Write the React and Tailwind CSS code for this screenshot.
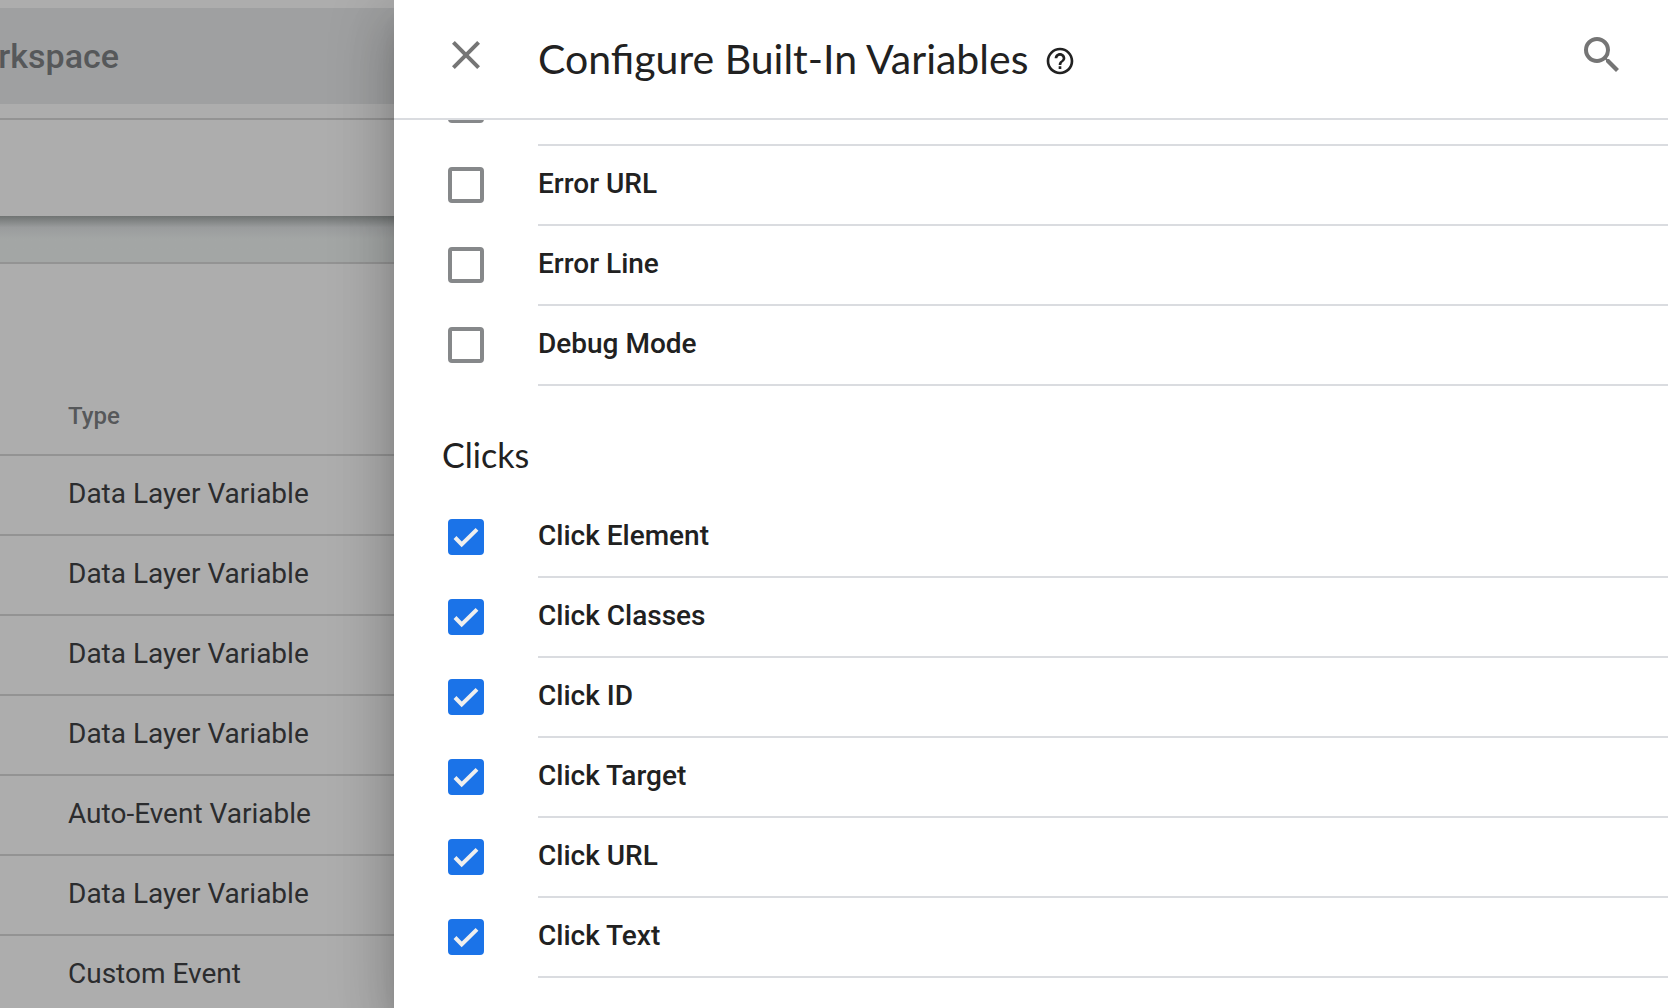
import React, { useState } from "react";
import { MdClose, MdSearch, MdHelpOutline } from "react-icons/md";

const variableTypes = [
  "Data Layer Variable",
  "Data Layer Variable",
  "Data Layer Variable",
  "Data Layer Variable",
  "Auto-Event Variable",
  "Data Layer Variable",
  "Custom Event",
];

const errorVariables = ["Error Message", "Error URL", "Error Line", "Debug Mode"];

const clickVariables = [
  "Click Element",
  "Click Classes",
  "Click ID",
  "Click Target",
  "Click URL",
  "Click Text",
];

const VariableRow = ({ name, checked, onToggle }) => {
  const id = name.toLowerCase().replace(/\s+/g, "-");

  return (
    <li className="flex h-20 pl-[54px]">
      <span className="grid h-[78px] w-[90px] shrink-0 items-center">
        <input
          id={id}
          type="checkbox"
          checked={checked}
          onChange={onToggle}
          className="col-start-1 row-start-1 size-9 appearance-none rounded-[4px] border-4 border-[#86888a] bg-white checked:border-[#1b73e8] checked:bg-[#1b73e8]"
        />
        {checked && (
          <svg
            viewBox="0 0 36 36"
            className="pointer-events-none col-start-1 row-start-1 size-9"
            fill="none"
            stroke="#efefef"
            strokeWidth="4"
          >
            <path d="M7 18.5 L13.7 25.5 L29 10.3" />
          </svg>
        )}
      </span>
      <label
        htmlFor={id}
        className="flex flex-1 items-center border-b-2 border-[#dadce0] pb-0.5 text-[28px] font-medium text-[#212121]"
      >
        {name}
      </label>
    </li>
  );
};

const WorkspacePage = () => (
  <div className="w-[394px] shrink-0 overflow-hidden bg-[#adadad] font-['Roboto',sans-serif]">
    <div className="border-b-2 border-[#939393] pt-2 pb-3.5">
      <div className="flex h-24 items-center bg-[#9fa0a1]">
        <div className="flex w-[119px] justify-end overflow-hidden text-[34px] font-medium text-[#56585a]">
          Workspace
        </div>
      </div>
    </div>
    <div className="h-24" />
    <div className="h-12 border-b-2 border-[#939393] bg-[#a3a6a5] bg-linear-to-b from-[#707473] via-[#9a9c9d] via-25% to-[#a3a6a5] to-50%" />

    <table className="w-full border-separate border-spacing-0 text-left">
      <thead>
        <tr className="h-48">
          <th className="border-b-2 border-[#939393] pb-[22px] pl-[68px] align-bottom text-2xl font-medium text-[#56585a]">
            Type
          </th>
        </tr>
      </thead>
      <tbody>
        {variableTypes.map((type, index) => (
          <tr key={index} className="h-20">
            <td className="border-b-2 border-[#939393] pb-0.5 pl-[68px] text-[28px] text-[#2b2c2e]">
              {type}
            </td>
          </tr>
        ))}
      </tbody>
    </table>
  </div>
);

const App = () => {
  const [selected, setSelected] = useState(clickVariables);

  const toggle = (name) => {
    setSelected((prev) =>
      prev.includes(name) ? prev.filter((n) => n !== name) : [...prev, name]
    );
  };

  const renderRows = (names) =>
    names.map((name) => (
      <VariableRow
        key={name}
        name={name}
        checked={selected.includes(name)}
        onToggle={() => toggle(name)}
      />
    ));

  return (
    <div className="flex h-screen overflow-hidden">
      <WorkspacePage />

      {/* Drawer */}
      <section className="relative flex min-w-0 flex-1 flex-col bg-white font-['Roboto',sans-serif] shadow-[0_16px_20px_-10px_rgba(0,0,0,0.2),0_32px_48px_4px_rgba(0,0,0,0.14),0_12px_60px_10px_rgba(0,0,0,0.12)]">
        <header className="flex h-[120px] shrink-0 items-center border-b-2 border-[#dadce0] pr-[42px] pb-2 pl-12">
          <button type="button" aria-label="Close" className="mr-12 text-[#757575]">
            <MdClose size={48} />
          </button>
          <h1 className="pt-2 font-['Lato',sans-serif] text-[41px] text-[#212121]">
            Configure Built-In Variables
          </h1>
          <button type="button" aria-label="Help" className="ml-4 pt-3 text-[#212121]">
            <MdHelpOutline size={32} />
          </button>
          <button type="button" aria-label="Search" className="ml-auto text-[#757575]">
            <MdSearch size={48} />
          </button>
        </header>

        <div className="min-h-0 flex-1 overflow-hidden">
          <ul className="-mt-[54px]">{renderRows(errorVariables)}</ul>
          <h2 className="flex h-28 items-center pt-6 pl-12 font-['Lato',sans-serif] text-[34px] text-[#212121]">
            Clicks
          </h2>
          <ul>{renderRows(clickVariables)}</ul>
        </div>
      </section>
    </div>
  );
};

export default App;
